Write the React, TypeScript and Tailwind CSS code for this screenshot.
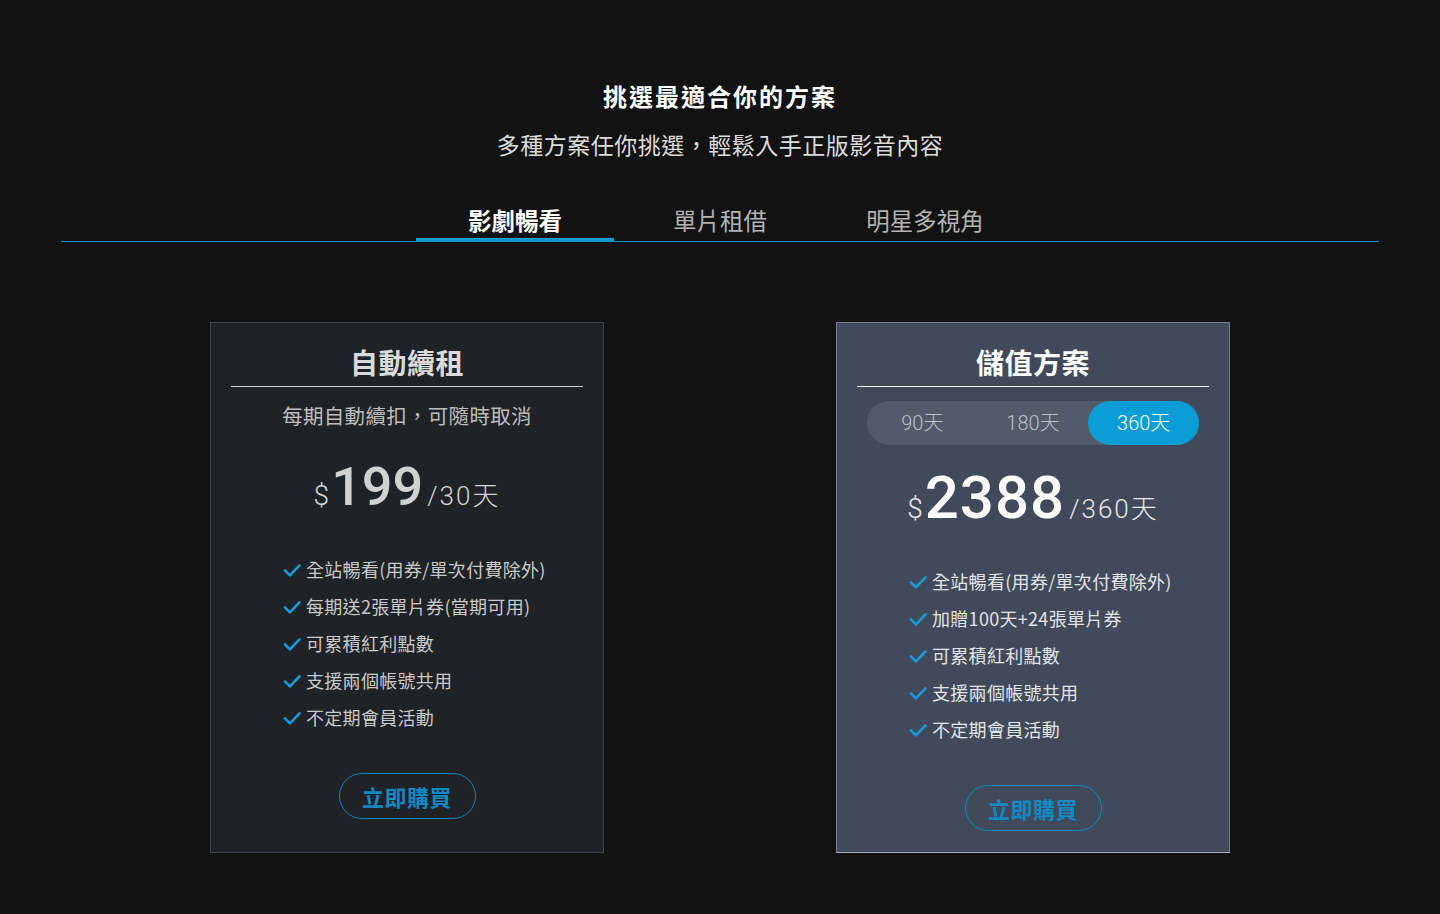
import React from "react";

const CJK = { fontFamily: '"Noto Sans CJK TC", "Noto Sans", sans-serif' };
const NUM = { fontFamily: 'Roboto, "Noto Sans CJK TC", sans-serif' };

function CheckIcon() {
  return (
    <svg width="20" height="20" viewBox="0 0 24 24" fill="none" stroke="#1a9bd8" strokeWidth="3.2" strokeLinecap="round" strokeLinejoin="round" className="shrink-0 mt-[1px]">
      <path d="M3.5 12.5 9.5 18.5 21 6.5" />
    </svg>
  );
}

function Features({ items, color }: { items: string[]; color: string }) {
  return (
    <ul className="flex flex-col gap-[9px] pl-[71px]">
      {items.map((t) => (
        <li key={t} className={`flex items-center gap-[4px] text-[18px] leading-[28px] tracking-[0.3px] ${color}`}>
          <CheckIcon />
          <span>{t}</span>
        </li>
      ))}
    </ul>
  );
}

function BuyButton({ className }: { className: string }) {
  return (
    <div className={`flex justify-center ${className}`}>
      <button className="w-[137px] h-[46px] rounded-full border border-[#0b86bb] text-[#1189c2] text-[22px] font-bold leading-[44px] tracking-[0.5px] pb-[2px]">
        立即購買
      </button>
    </div>
  );
}

export default function App() {
  const tabs = ["影劇暢看", "單片租借", "明星多視角"];
  const leftFeatures = ["全站暢看(用券/單次付費除外)", "每期送2張單片券(當期可用)", "可累積紅利點數", "支援兩個帳號共用", "不定期會員活動"];
  const rightFeatures = ["全站暢看(用券/單次付費除外)", "加贈100天+24張單片券", "可累積紅利點數", "支援兩個帳號共用", "不定期會員活動"];
  return (
    <div className="min-h-[914px] w-full bg-[#121212] pt-[78px]" style={CJK}>
      <h1 className="text-center text-white font-bold text-[24px] leading-[36px] tracking-[2px]">挑選最適合你的方案</h1>
      <p className="mt-[13px] text-center text-[#dcdcdc] text-[23px] leading-[34px] tracking-[0.5px]">多種方案任你挑選，輕鬆入手正版影音內容</p>

      <div className="mt-[43px] mx-[61px] relative">
        <div className="flex justify-center gap-[7px]">
          {tabs.map((t, i) => (
            <div key={t} className="w-[198px] flex flex-col items-stretch">
              <div
                className={`text-center text-[23.5px] leading-[34px] -mt-[1px] pb-[1px] ${
                  i === 0 ? "text-white font-bold" : "text-[#b3b3b3]"
                }`}
              >
                {t}
              </div>
              <div className={`h-[4px] ${i === 0 ? "bg-[#0e9bd5]" : "bg-transparent"}`} />
            </div>
          ))}
        </div>
        <div className="absolute left-0 right-0 bottom-0 h-px bg-[#1590c2]" />
      </div>

      <div className="mt-[80px] flex justify-center items-stretch gap-[232px]">
        {/* Left card */}
        <div className="w-[394px] bg-[#1f2226] border border-[#3c4453] pt-[20px]">
          <div className="text-center text-[#dadada] font-bold text-[28px] leading-[40px] tracking-[0.5px] -mt-[1px] pb-[1px]">自動續租</div>
          <div className="mt-[3px] mx-[20px] h-px bg-[#d0d0d0]" />
          <div className="mt-[14px] pb-[1px] text-center text-[#bdbdbd] text-[20.5px] leading-[28px] tracking-[0.3px]">每期自動續扣，可隨時取消</div>
          <div className="mt-[27px] h-[60px] flex justify-center items-baseline text-[#d2d2d2]" style={NUM}>
            <span className="text-[28px] font-light mr-[2px]">$</span>
            <span className="text-[54px] font-medium leading-[60px]">199</span>
            <span className="text-[26px] font-light tracking-[2px] ml-[4px]">/30天</span>
          </div>
          <div className="mt-[38px]">
            <Features items={leftFeatures} color="text-[#c9c9c9]" />
          </div>
          <BuyButton className="mt-[42px]" />
        </div>

        {/* Right card */}
        <div className="w-[394px] bg-[#414a5b] border border-[#72809a] border-b-[#a5afc3] pt-[20px] pb-[21px]">
          <div className="text-center text-white font-bold text-[28px] leading-[40px] tracking-[0.5px] -mt-[1px] pb-[1px]">儲值方案</div>
          <div className="mt-[3px] mx-[20px] h-px bg-[#f0f0f0]" />
          <div className="mt-[14px] mx-[30px] h-[44px] rounded-full bg-[#525b6a] flex" style={NUM}>
            <div className="flex-1 flex items-center justify-center text-[20px] font-light text-[#bcc0c7]">90天</div>
            <div className="flex-1 flex items-center justify-center text-[20px] font-light text-[#bcc0c7]">180天</div>
            <div className="flex-1 flex items-center justify-center text-[20px] font-light text-white rounded-full bg-[#0b9ed6]">360天</div>
          </div>
          <div className="mt-[20px] h-[66px] flex justify-center items-baseline text-white" style={NUM}>
            <span className="text-[28px] font-light mr-[2px] text-[#e6e6e6]">$</span>
            <span className="text-[60px] font-medium leading-[66px] tracking-[1px]">2388</span>
            <span className="text-[26px] font-light tracking-[2px] ml-[4px] text-[#e6e6e6]">/360天</span>
          </div>
          <div className="mt-[36px]">
            <Features items={rightFeatures} color="text-[#e2e4e8]" />
          </div>
          <BuyButton className="mt-[42px]" />
        </div>
      </div>
    </div>
  );
}
